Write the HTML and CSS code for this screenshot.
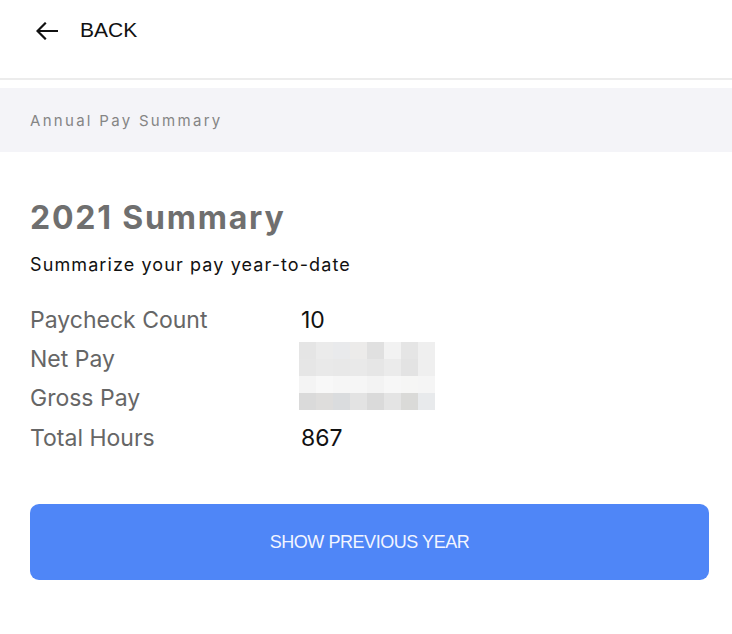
FILE: index.html
```html
<!DOCTYPE html>
<html>
<head>
<meta charset="utf-8">
<link rel="stylesheet" href="styles.css">
</head>
<body>
<header class="topbar">
  <div class="back">
    <svg class="back-icon" width="22" height="18" viewBox="0 0 22 18" aria-hidden="true">
      <path d="M21 9H2M9 1.5L1.5 9L9 16.5" fill="none" stroke="#111" stroke-width="2.2" stroke-linecap="square" stroke-linejoin="miter"/>
    </svg>
    <span class="back-label">BACK</span>
  </div>
</header>
<div class="band"><span class="band-title">Annual Pay Summary</span></div>
<main class="content">
  <h1 class="title">2021 Summary</h1>
  <p class="subtitle">Summarize your pay year-to-date</p>
  <div class="stats">
    <div class="label">Paycheck Count</div><div class="value">10</div>
    <div class="label">Net Pay</div><div class="value"></div>
    <div class="label">Gross Pay</div><div class="value"></div>
    <div class="label">Total Hours</div><div class="value">867</div>
    <div class="mosaic">
      <i style="background:#e5e5e5"></i><i style="background:#ebebeb"></i><i style="background:#e9eaec"></i><i style="background:#ecebea"></i><i style="background:#e0e0e0"></i><i style="background:#f2f2f2"></i><i style="background:#e5e5e5"></i><i style="background:#efefef"></i>
      <i style="background:#e6e6e6"></i><i style="background:#e9e9e9"></i><i style="background:#e8e8e8"></i><i style="background:#e9e9e9"></i><i style="background:#e6e6e6"></i><i style="background:#ebebeb"></i><i style="background:#e3e3e3"></i><i style="background:#efefef"></i>
      <i style="background:#f4f4f4"></i><i style="background:#f8f8f8"></i><i style="background:#f6f6f6"></i><i style="background:#f6f6f6"></i><i style="background:#f3f3f3"></i><i style="background:#f7f7f7"></i><i style="background:#f6f6f5"></i><i style="background:#f5f5f5"></i>
      <i style="background:#dadada"></i><i style="background:#dedddc"></i><i style="background:#dadcde"></i><i style="background:#e3e3e3"></i><i style="background:#dadada"></i><i style="background:#e4e4e4"></i><i style="background:#dadad8"></i><i style="background:#e8eaec"></i>
    </div>
  </div>
  <button class="prev-btn" type="button">SHOW PREVIOUS YEAR</button>
</main>
</body>
</html>
```

FILE: styles.css
```css
* { box-sizing: border-box; }
html, body { margin: 0; padding: 0; background: #fff; }
body { font-family: Inter, "Noto Sans", sans-serif; color: #111; }

.topbar {
  height: 80px;
  padding: 16px 0 0 36px;
  border-bottom: 2px solid #ececec;
}
.back {
  height: 28px;
  display: flex;
  align-items: center;
}
.back-icon { display: block; margin-right: 22px; margin-top: 1px; }
.back-label {
  font-family: "Liberation Sans", Arial, sans-serif;
  font-size: 21px;
  line-height: 24px;
  color: #111;
}

.band {
  margin-top: 8px;
  height: 64px;
  background: #f4f4f8;
  display: flex;
  align-items: center;
  padding-left: 30px;
}
.band-title {
  font-size: 15px;
  letter-spacing: 2.3px;
  color: #858585;
}

.content { padding: 0 23px 0 30px; }
.title {
  margin: 46px 0 0;
  font-size: 32px;
  line-height: 40px;
  font-weight: 700;
  letter-spacing: 1.8px;
  color: #6f6f6f;
}
.subtitle {
  margin: 15px 0 0;
  font-size: 18px;
  line-height: 24px;
  letter-spacing: 1.1px;
  color: #111;
}

.stats {
  position: relative;
  margin-top: 23px;
  display: grid;
  grid-template-columns: 271px 1fr;
  grid-auto-rows: 39.3px;
  align-items: center;
  font-size: 23px;
}
.label { color: #666; }
.value { color: #111; }

.mosaic {
  position: absolute;
  left: 269px;
  top: 42px;
  display: grid;
  grid-template-columns: repeat(8, 17px);
  grid-auto-rows: 17px;
}
.mosaic i { display: block; }

.prev-btn {
  display: block;
  width: 100%;
  height: 76px;
  margin-top: 47px;
  border: none;
  border-radius: 9px;
  background: #4f86f7;
  color: #f2f5ff;
  font-family: "Liberation Sans", Arial, sans-serif;
  font-size: 18px;
  letter-spacing: -0.45px;
}
```
